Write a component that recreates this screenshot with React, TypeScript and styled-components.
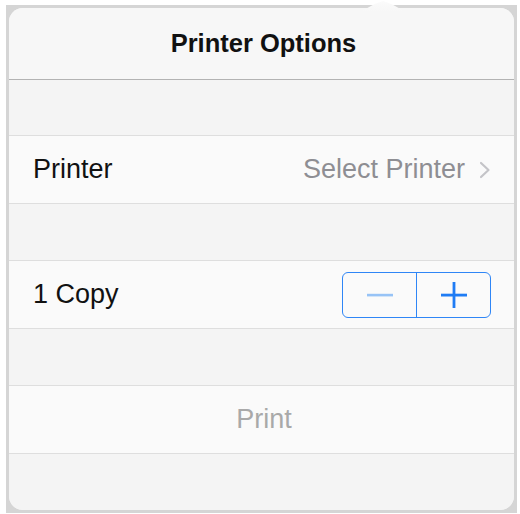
import React from "react";
import styled, { createGlobalStyle } from "styled-components";

const Global = createGlobalStyle`
  html, body { margin: 0; padding: 0; background: #ffffff; }
  body { font-family: "Liberation Sans", Arial, sans-serif; -webkit-font-smoothing: antialiased; }
`;

const Page = styled.div`
  width: 520px;
  height: 514px;
  padding: 5px 3px 1px 6px;
  box-sizing: border-box;
  position: relative;
`;

const Frame = styled.div`
  background: #d5d5d5;
  padding: 3px;
  height: 100%;
  box-sizing: border-box;
`;

const Arrow = styled.div`
  position: absolute;
  top: 1px;
  left: 362px;
  width: 42px;
  height: 10px;
  background: linear-gradient(to bottom, #fbfbfb, #f7f7f7);
  clip-path: polygon(0 100%, 30% 30%, 50% 0, 70% 30%, 100% 100%);
`;

const Panel = styled.div`
  background: #f4f4f4;
  border-radius: 14px;
  height: 100%;
  overflow: hidden;
  display: flex;
  flex-direction: column;
`;

const Header = styled.div`
  height: 71px;
  flex: none;
  display: flex;
  align-items: center;
  justify-content: center;
  background: #f7f7f7;
  border-bottom: 1px solid #b3b3b3;
  font-size: 25.5px;
  font-weight: 700;
  color: #111;
  padding-left: 4px;
`;

const Gap = styled.div<{ $h: number }>`
  height: ${(p) => p.$h}px;
  flex: none;
  background: #f4f4f4;
  border-bottom: 1px solid #dedede;
`;

const Row = styled.div<{ $center?: boolean }>`
  height: 67px;
  flex: none;
  box-sizing: content-box;
  background: #fafafa;
  border-bottom: 1px solid #dedede;
  display: flex;
  align-items: center;
  justify-content: ${(p) => (p.$center ? "center" : "space-between")};
  padding: 0 23px 0 24px;
  font-size: 27px;
  color: #111;
`;

const Label = styled.span``;

const Detail = styled.span`
  display: flex;
  align-items: center;
  gap: 14px;
  color: #8e8e93;
`;

const Chevron = styled.svg`
  width: 12px;
  height: 18px;
`;

const Stepper = styled.div`
  display: flex;
  width: 149px;
  height: 46px;
  box-sizing: border-box;
  border: 1.5px solid #2f86f6;
  border-radius: 6px;
  margin-right: 0;
`;

const StepButton = styled.div<{ $divider?: boolean }>`
  flex: 1;
  display: flex;
  align-items: center;
  justify-content: center;
  border-left: ${(p) => (p.$divider ? "1.5px solid #2f86f6" : "none")};
`;

const PrintText = styled.span`
  color: #a9a9a9;
  padding-left: 4px;
`;

export default function App() {
  return (
    <>
      <Global />
      <Page>
        <Frame>
          <Panel>
            <Header>Printer Options</Header>
            <Gap $h={55} />
            <Row>
              <Label>Printer</Label>
              <Detail>
                Select Printer
                <Chevron viewBox="0 0 12 18">
                  <path d="M2 2 L9.5 9 L2 16" fill="none" stroke="#c4c4c8" strokeWidth="2.2" strokeLinecap="round" strokeLinejoin="round" />
                </Chevron>
              </Detail>
            </Row>
            <Gap $h={56} />
            <Row>
              <Label>1 Copy</Label>
              <Stepper>
                <StepButton>
                  <svg width="28" height="4" viewBox="0 0 28 4">
                    <rect x="1" y="0.8" width="26" height="2.6" fill="#97c3f6" />
                  </svg>
                </StepButton>
                <StepButton $divider>
                  <svg width="28" height="28" viewBox="0 0 28 28">
                    <rect x="1" y="12.7" width="26" height="2.8" fill="#1f7cf4" />
                    <rect x="12.6" y="1" width="2.8" height="26" fill="#1f7cf4" />
                  </svg>
                </StepButton>
              </Stepper>
            </Row>
            <Gap $h={56} />
            <Row $center>
              <PrintText>Print</PrintText>
            </Row>
            <Gap $h={60} />
          </Panel>
        </Frame>
        <Arrow />
      </Page>
    </>
  );
}
